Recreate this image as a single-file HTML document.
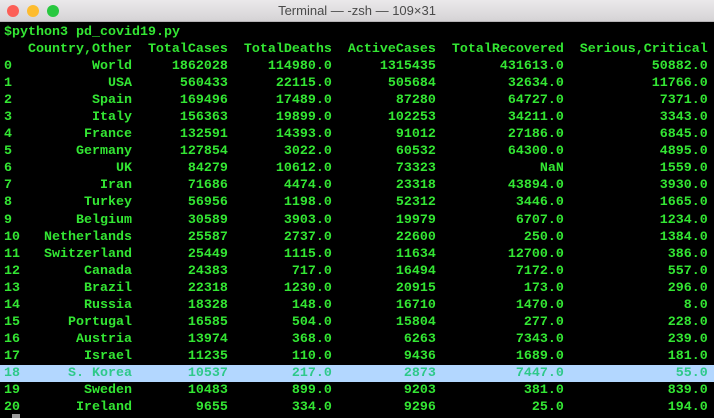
<!DOCTYPE html>
<html><head><style>
body{margin:0;width:714px;height:418px;overflow:hidden;background:#000;font-family:"Liberation Mono",monospace}
.tb{position:absolute;left:0;top:0;width:714px;height:22px;background:linear-gradient(#ebe9eb,#d5d3d5);border-bottom:1px solid #b5b3b5;box-sizing:border-box;font-family:"Liberation Sans",sans-serif;font-size:13px;color:#4a4a4a;text-align:center;line-height:22px}
.d{position:absolute;top:5px;width:12px;height:12px;border-radius:50%}
.t{position:absolute;left:4px;top:24px;font-size:13.33px;font-weight:bold;color:#33e633;line-height:17.05px}
.r{height:17.05px;display:flex;white-space:pre}
.r span{display:inline-block;text-align:right;flex:none}
.r span:nth-child(1){width:2ch;text-align:left}
.r span:nth-child(2){width:14ch}
.r span:nth-child(3){width:12ch}
.r span:nth-child(4){width:13ch}
.r span:nth-child(5){width:13ch}
.r span:nth-child(6){width:16ch}
.r span:nth-child(7){width:18ch}
.h{background:#b3d7ff;color:#2ec98a;margin-left:-4px;padding-left:4px;width:714px;box-sizing:border-box}
</style></head><body>
<div class="tb">Terminal — -zsh — 109×31
<div class="d" style="left:7px;background:#fc5f57"></div>
<div class="d" style="left:27px;background:#fdbc2e"></div>
<div class="d" style="left:47px;background:#29c840"></div>
</div>
<div class="t"><div class="r">$python3 pd_covid19.py</div><div class="r"><span></span><span>Country,Other</span><span>TotalCases</span><span>TotalDeaths</span><span>ActiveCases</span><span>TotalRecovered</span><span>Serious,Critical</span></div><div class="r"><span>0</span><span>World</span><span>1862028</span><span>114980.0</span><span>1315435</span><span>431613.0</span><span>50882.0</span></div><div class="r"><span>1</span><span>USA</span><span>560433</span><span>22115.0</span><span>505684</span><span>32634.0</span><span>11766.0</span></div><div class="r"><span>2</span><span>Spain</span><span>169496</span><span>17489.0</span><span>87280</span><span>64727.0</span><span>7371.0</span></div><div class="r"><span>3</span><span>Italy</span><span>156363</span><span>19899.0</span><span>102253</span><span>34211.0</span><span>3343.0</span></div><div class="r"><span>4</span><span>France</span><span>132591</span><span>14393.0</span><span>91012</span><span>27186.0</span><span>6845.0</span></div><div class="r"><span>5</span><span>Germany</span><span>127854</span><span>3022.0</span><span>60532</span><span>64300.0</span><span>4895.0</span></div><div class="r"><span>6</span><span>UK</span><span>84279</span><span>10612.0</span><span>73323</span><span>NaN</span><span>1559.0</span></div><div class="r"><span>7</span><span>Iran</span><span>71686</span><span>4474.0</span><span>23318</span><span>43894.0</span><span>3930.0</span></div><div class="r"><span>8</span><span>Turkey</span><span>56956</span><span>1198.0</span><span>52312</span><span>3446.0</span><span>1665.0</span></div><div class="r"><span>9</span><span>Belgium</span><span>30589</span><span>3903.0</span><span>19979</span><span>6707.0</span><span>1234.0</span></div><div class="r"><span>10</span><span>Netherlands</span><span>25587</span><span>2737.0</span><span>22600</span><span>250.0</span><span>1384.0</span></div><div class="r"><span>11</span><span>Switzerland</span><span>25449</span><span>1115.0</span><span>11634</span><span>12700.0</span><span>386.0</span></div><div class="r"><span>12</span><span>Canada</span><span>24383</span><span>717.0</span><span>16494</span><span>7172.0</span><span>557.0</span></div><div class="r"><span>13</span><span>Brazil</span><span>22318</span><span>1230.0</span><span>20915</span><span>173.0</span><span>296.0</span></div><div class="r"><span>14</span><span>Russia</span><span>18328</span><span>148.0</span><span>16710</span><span>1470.0</span><span>8.0</span></div><div class="r"><span>15</span><span>Portugal</span><span>16585</span><span>504.0</span><span>15804</span><span>277.0</span><span>228.0</span></div><div class="r"><span>16</span><span>Austria</span><span>13974</span><span>368.0</span><span>6263</span><span>7343.0</span><span>239.0</span></div><div class="r"><span>17</span><span>Israel</span><span>11235</span><span>110.0</span><span>9436</span><span>1689.0</span><span>181.0</span></div><div class="r h"><span>18</span><span>S. Korea</span><span>10537</span><span>217.0</span><span>2873</span><span>7447.0</span><span>55.0</span></div><div class="r"><span>19</span><span>Sweden</span><span>10483</span><span>899.0</span><span>9203</span><span>381.0</span><span>839.0</span></div><div class="r"><span>20</span><span>Ireland</span><span>9655</span><span>334.0</span><span>9296</span><span>25.0</span><span>194.0</span></div></div>
<div style="position:absolute;left:12px;top:414px;width:8px;height:4px;background:#999"></div>
</body></html>
